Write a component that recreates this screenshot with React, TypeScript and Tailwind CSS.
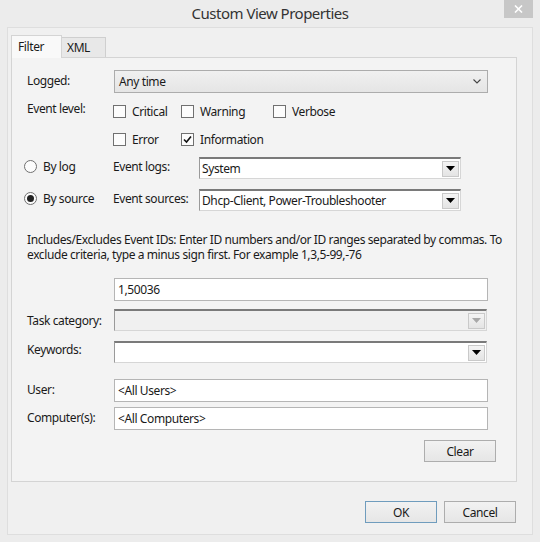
import React from 'react';

const Check: React.FC<{ label: string; checked?: boolean; className?: string }> = ({ label, checked, className }) => (
    <div className={`flex items-center gap-[6px] ${className ?? ''}`}>
        <div className="w-[13px] h-[13px] border border-[#707070] bg-[#fcfcfc] flex items-center justify-center shrink-0">
            {checked && (
                <svg width="9" height="9" viewBox="0 0 9 9">
                    <path d="M1 4.5 L3.5 7 L8 1.5" fill="none" stroke="#111" strokeWidth="1.6" />
                </svg>
            )}
        </div>
        <span>{label}</span>
    </div>
);

const Radio: React.FC<{ label: string; checked?: boolean }> = ({ label, checked }) => (
    <div className="flex items-center gap-[6px] w-[89px] -mt-[4px]">
        <div className="w-[13px] h-[13px] rounded-full border border-[#707070] bg-[#fcfcfc] flex items-center justify-center shrink-0">
            {checked && <div className="w-[7px] h-[7px] rounded-full bg-[#222]" />}
        </div>
        <span>{label}</span>
    </div>
);

const Triangle: React.FC<{ color?: string }> = ({ color = '#000' }) => (
    <svg width="9" height="5" viewBox="0 0 9 5">
        <path d="M0 0 H9 L4.5 5 Z" fill={color} />
    </svg>
);

// editable combo with sunken border and a small drop button
const Combo: React.FC<{ value?: string; disabled?: boolean; className?: string }> = ({ value, disabled, className }) => (
    <div
        className={`h-[22px] flex items-center border border-[#d6d6d6] border-t-[#7a7a7a] border-l-[#9a9a9a] border-t-2 ${
            disabled ? 'bg-[#f0f0f0]' : 'bg-white'
        } ${className ?? ''}`}
    >
        <span className="flex-1 pl-[2px] truncate">{value}</span>
        <div className="w-[17px] h-[16px] mr-[1px] border border-[#c9c9c9] bg-gradient-to-b from-[#f4f4f4] to-[#e4e4e4] flex items-center justify-center">
            <Triangle color={disabled ? '#a8a8a8' : '#000'} />
        </div>
    </div>
);

const TextBox: React.FC<{ value: string }> = ({ value }) => (
    <div className="h-[23px] w-[374px] border border-[#b5b5b5] bg-white flex items-center pl-[3px]">{value}</div>
);

const Button: React.FC<{ label: string; primary?: boolean; className?: string }> = ({ label, primary, className }) => (
    <div
        className={`h-[22px] w-[72px] flex items-center justify-center border bg-gradient-to-b from-[#f2f2f2] to-[#e6e6e6] ${
            primary ? 'border-[#6f9cbd]' : 'border-[#adadad]'
        } ${className ?? ''}`}
    >
        {label}
    </div>
);

export default function App() {
    return (
        <div className="w-[540px] h-[542px] bg-[#ececec] flex flex-col text-[12px] leading-[15px] tracking-[-0.4px] text-[#1a1a1a] font-['Noto_Sans',sans-serif] overflow-hidden">
            {/* title bar */}
            <div className="h-[27px] relative flex items-center justify-center shrink-0">
                <span className="text-[15px] text-[#333] pb-[1px] tracking-[-0.5px]">Custom View Properties</span>
                <div className="absolute right-[7px] top-0 w-[29px] h-[18px] bg-[#c7c7c7] flex items-center justify-center">
                    <svg width="9" height="8" viewBox="0 0 9 8">
                        <path d="M1 0.5 L8 7.5 M8 0.5 L1 7.5" stroke="#fff" strokeWidth="1.6" />
                    </svg>
                </div>
            </div>

            {/* client area */}
            <div className="mx-[7px] mb-[7px] flex-1 bg-[#f0f0f0] border border-[#dedede] flex flex-col">
                {/* tabs */}
                <div className="flex items-end h-[29px] pt-[6px] pl-[3px] relative z-10 shrink-0">
                    <div className="w-[51px] h-[23px] -mb-px border border-b-0 border-[#d4d4d4] bg-[#f9f9f9] pl-[6px] pt-[3px]">Filter</div>
                    <div className="w-[44px] h-[20px] border border-l-0 border-b-0 border-[#cfcfcf] bg-[#e8e8e8] pl-[5px] pt-[2px]">XML</div>
                </div>

                {/* tab panel */}
                <div className="ml-[3px] w-[506px] h-[425px] border border-[#d4d4d4] bg-[#f3f3f3] flex flex-col shrink-0 pl-[15px]">
                    <div className="flex items-center mt-[12px] h-[23px]">
                        <span className="w-[87px] -mt-[3px]">Logged:</span>
                        <div className="w-[374px] h-[23px] border border-[#acacac] bg-gradient-to-b from-[#f0f0f0] to-[#e5e5e5] flex items-center pl-[4px] pr-[6px]">
                            <span className="flex-1">Any time</span>
                            <svg width="8" height="5" viewBox="0 0 8 5">
                                <path d="M0.5 0.5 L4 4 L7.5 0.5" fill="none" stroke="#444" strokeWidth="1.1" />
                            </svg>
                        </div>
                    </div>

                    <div className="flex items-center mt-[8px] h-[20px]">
                        <span className="w-[86px] -mt-[6px]">Event level:</span>
                        <Check label="Critical" className="w-[68px]" />
                        <Check label="Warning" className="w-[92px]" />
                        <Check label="Verbose" />
                    </div>
                    <div className="flex items-center mt-[8px] h-[20px] pl-[86px]">
                        <Check label="Error" className="w-[68px]" />
                        <Check label="Information" checked />
                    </div>

                    <div className="flex items-center mt-[8px] h-[22px] -ml-[3px]">
                        <Radio label="By log" />
                        <span className="w-[86px] -mt-[4px]">Event logs:</span>
                        <Combo value="System" className="w-[262px]" />
                    </div>
                    <div className="flex items-center mt-[10px] h-[22px] -ml-[3px]">
                        <Radio label="By source" checked />
                        <span className="w-[86px] -mt-[4px]">Event sources:</span>
                        <Combo value="Dhcp-Client, Power-Troubleshooter" className="w-[262px]" />
                    </div>

                    <p className="mt-[21px] w-[480px]">
                        Includes/Excludes Event IDs: Enter ID numbers and/or ID ranges separated by commas. To exclude criteria, type a minus sign first. For example 1,3,5-99,-76
                    </p>

                    <div className="mt-[16px] pl-[87px]">
                        <TextBox value="1,50036" />
                    </div>

                    <div className="flex items-center mt-[8px] h-[22px]">
                        <span className="w-[87px]">Task category:</span>
                        <Combo disabled className="w-[373px]" />
                    </div>
                    <div className="flex items-center mt-[10px] h-[22px]">
                        <span className="w-[87px] -mt-[6px]">Keywords:</span>
                        <Combo className="w-[373px]" />
                    </div>

                    <div className="flex items-center mt-[16px]">
                        <span className="w-[87px] -mt-[3px]">User:</span>
                        <TextBox value="<All Users>" />
                    </div>
                    <div className="flex items-center mt-[5px]">
                        <span className="w-[87px] -mt-[3px]">Computer(s):</span>
                        <TextBox value="<All Computers>" />
                    </div>

                    <div className="flex justify-end mt-[10px] pr-[20px]">
                        <Button label="Clear" />
                    </div>
                </div>

                {/* dialog buttons */}
                <div className="flex justify-end gap-[7px] mt-[19px] pr-[16px]">
                    <Button label="OK" primary />
                    <Button label="Cancel" />
                </div>
            </div>
        </div>
    );
}
